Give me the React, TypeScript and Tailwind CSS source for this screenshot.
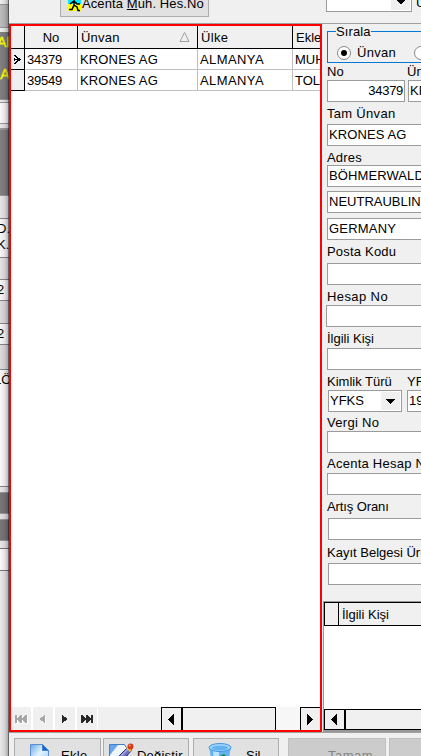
import React from 'react';

type LineProps = { label: string; value?: string; gap: string; box?: string; height: string; track?: string };

function Input({ value, className = '' }: { value?: string; className?: string }) {
  return (
    <div className={`h-[22px] shrink-0 overflow-hidden border border-[#9b9b9b] bg-white px-px pt-[2px] ${className}`}>
      {value}
    </div>
  );
}

function Line({ label, value, gap, box = 'ml-[3px]', height, track = '' }: LineProps) {
  return (
    <div className="shrink-0">
      <div className={`pl-[3px] ${gap} ${height} ${track}`}>{label}</div>
      <Input value={value} className={`w-[140px] tracking-[0.1px] ${box}`} />
    </div>
  );
}

function BackgroundWindow() {
  const parts: [string, string][] = [
    ['h-[4px] bg-[#efefef]', ''],
    ['h-[23px] bg-[#bdbdbd] border-t border-[#999]', ''],
    ['h-[5px] bg-[#ededed] border-t border-[#999]', ''],
    ['h-[67px] bg-[#808080]', 'yellow'],
    ['h-[3px] bg-[#e8e8e8] border-t border-[#999]', ''],
    ['h-[22px] bg-[#fafafa] border-y border-[#999]', ''],
    ['h-[4px] bg-[#e8e8e8]', ''],
    ['h-[67px] bg-[#808080] border-t-2 border-[#999]', ''],
    ['h-[23px] bg-[#e7e7e7] border-t border-[#999]', ''],
    ['h-[39px] bg-[#f7f7f7] border-t border-[#888]', 'dk'],
    ['h-[22px] bg-[#e3e3e3] border-t border-[#888]', ''],
    ['h-[21px] bg-[#f7f7f7] border-t border-[#888]', 'two'],
    ['h-[23px] bg-[#dcdcdc] border-t border-[#888]', ''],
    ['h-[21px] bg-[#f7f7f7] border-t border-[#888]', 'two'],
    ['h-[25px] bg-[#dcdcdc] border-t border-[#888]', ''],
    ['h-[117px] bg-[#f9f9f9] border-t border-[#888]', 'lo'],
    ['h-[6px] bg-[#e8e8e8] border-t border-[#888]', ''],
    ['h-[22px] bg-[#777] border-y border-[#999]', ''],
    ['h-[5px] bg-[#e3e3e3]', ''],
    ['h-[22px] bg-[#777] border-y border-[#999]', ''],
    ['h-[7px] bg-[#e8e8e8]', ''],
    ['h-[23px] bg-[#fafafa] border-y border-[#777]', ''],
    ['h-[185px] bg-[#e8e8e8]', ''],
  ];
  return (
    <div className="relative flex h-[756px] w-[9px] shrink-0 flex-col overflow-hidden">
      {parts.map(([cls, kind], i) => (
        <div key={i} className={`shrink-0 overflow-hidden whitespace-nowrap ${cls}`}>
          {kind === 'yellow' && (
            <div className="text-[14px] text-[#ffff00] [-webkit-text-stroke:0.4px_#ffff00]">
              <div className="-ml-[3px] mt-[3px]">AL</div>
              <div className="-ml-[9px] mt-[17px]">KA</div>
            </div>
          )}
          {kind === 'dk' && (
            <div className="-ml-[3px]">
              <div className="mt-[2px]">D.</div>
              <div className="mt-[1px]">K.</div>
            </div>
          )}
          {kind === 'two' && <div className="-ml-[3px] mt-[2px]">2</div>}
          {kind === 'lo' && <div className="-ml-[6px] mt-[2px]">LÖ</div>}
        </div>
      ))}
      <div className="absolute inset-0 bg-linear-to-r from-transparent via-black/8 to-black/30" />
      <div className="absolute inset-y-0 right-0 w-px bg-black/40" />
    </div>
  );
}

function GridRow({ no, extra, current }: { no: string; extra: string; current?: boolean }) {
  return (
    <div className="flex h-[21px] shrink-0">
      <div className="flex w-[14px] shrink-0 items-center border-r border-b border-black bg-[#f0f0f0]">
        {current && (
          <svg width="13" height="20" viewBox="0 0 13 20" shapeRendering="crispEdges">
            <path d="M3 6h2v1h1v1h1v1h2v1h1v1H9v1H7v1H6v1H5v1H3v-1h1v-1h1v-1h1v-1H3v-1h3V9H5V8H4V7H3zM3 9h1v3H3z" />
          </svg>
        )}
      </div>
      <div className="w-[53px] shrink-0 border-r border-b border-[#c0c0c0] pl-[2px] pt-[3px]">
        <span className="tracking-[-0.2px]">{no}</span>
      </div>
      <div className="w-[120px] shrink-0 border-r border-b border-[#c0c0c0] pl-[2px] pt-[3px] tracking-[0.15px]">KRONES AG</div>
      <div className="w-[95px] shrink-0 border-r border-b border-[#c0c0c0] pl-[2px] pt-[3px] tracking-[0.4px]">ALMANYA</div>
      <div className="w-[27px] shrink-0 overflow-hidden border-b border-[#c0c0c0] pl-[2px] pt-[3px]">{extra}</div>
    </div>
  );
}

function Arrow({ dir }: { dir: 'left' | 'right' }) {
  return (
    <svg className="mr-[2px]" width="6" height="11" viewBox="0 0 6 11" shapeRendering="crispEdges">
      <path d={dir === 'left' ? 'M6 0v11L0 6V5z' : 'M0 0v11l6-5V5z'} />
    </svg>
  );
}

function NavIcon({ kind }: { kind: 'first' | 'prev' | 'next' | 'last' }) {
  const paths = {
    first: 'M0 0h2v3h1V2h1V1h1V0h2v3h1V2h1V1h1V0h2v8h-2V7H9V6H8V5H7v3H5V7H4V6H3V5H2v3H0z',
    prev: 'M5 0v8H4V7H3V6H1V5H0V3h1V2h2V1h1V0z',
    next: 'M0 0h1v1h1v1h2v1h1v2H4v1H2v1H1v1H0z',
    last: 'M0 0h2v1h1v1h1v1h1V0h2v1h1v1h1v1h1V0h2v8h-2V5H9v1H8v1H7v1H5V5H4v1H3v1H2v1H0z',
  };
  const off = kind === 'first' || kind === 'prev';
  const wide = kind === 'first' || kind === 'last';
  return (
    <div className="mr-[2px] flex h-[23px] w-[20px] shrink-0 items-center justify-center bg-[#f0f0f0] pt-[1px]">
      <svg width={wide ? 13 : 6} height="9" viewBox={wide ? '0 0 13 9' : '0 0 6 9'} shapeRendering="crispEdges">
        {off && <path d={paths[kind]} fill="#fff" transform="translate(1 1)" />}
        <path d={paths[kind]} fill={off ? '#a7a7a7' : '#282828'} />
      </svg>
    </div>
  );
}

function MainGrid() {
  return (
    <div className="flex h-[708px] w-[313px] shrink-0 flex-col overflow-hidden border-2 border-[#ff0000] bg-white">
      <div className="flex h-[23px] shrink-0 border-b border-black bg-[#f0f0f0]">
        <div className="w-[14px] shrink-0 border-r border-black" />
        <div className="w-[53px] shrink-0 border-r border-black pt-[4px] text-center">No</div>
        <div className="flex w-[120px] shrink-0 justify-between border-r border-black pl-[3px] pr-[7px] pt-[4px]">
          <span className="tracking-[0.2px]">Ünvan</span>
          <svg className="mt-[1px]" width="11" height="12" viewBox="0 0 11 12">
            <path d="M5.5 1.5L10 10.5H1z" fill="none" stroke="#a0a0a0" />
          </svg>
        </div>
        <div className="w-[95px] shrink-0 border-r border-black pl-[3px] pt-[4px] tracking-[0.3px]">Ülke</div>
        <div className="w-[27px] shrink-0 overflow-hidden pl-[3px] pt-[4px]">Ekle</div>
      </div>
      <GridRow no="34379" extra="MUH" current />
      <GridRow no="39549" extra="TOL" />
      <div className="flex-1" />
      <div className="flex h-[23px] shrink-0">
        <NavIcon kind="first" />
        <NavIcon kind="prev" />
        <NavIcon kind="next" />
        <NavIcon kind="last" />
        <div className="-ml-px w-[63px] shrink-0 bg-[#f0f0f0]" />
        <div className="flex w-[21px] shrink-0 items-center justify-center border-t border-x border-black bg-[#f0f0f0] pt-[1px]">
          <Arrow dir="left" />
        </div>
        <div className="w-[94px] shrink-0 border-t border-x border-black bg-[#f0f0f0]" />
        <div className="w-[24px] shrink-0 bg-[#f7f7f7]" />
        <div className="flex w-[20px] shrink-0 items-center justify-center border-t border-l border-black bg-[#f0f0f0] pt-[1px]">
          <Arrow dir="right" />
        </div>
      </div>
    </div>
  );
}

function DetailPanel() {
  return (
    <div className="flex h-[708px] min-w-0 flex-1 flex-col overflow-hidden pl-[2px]">
      <fieldset className="ml-[3px] flex h-[39px] w-[120px] shrink-0 flex-col">
        <div className="flex h-[8px] items-end">
          <div className="h-px w-[9px] bg-[#0078d7]" />
          <span className="z-10 -mb-[7px] h-[15px] w-[35px] tracking-[0.1px]">Sırala</span>
          <div className="h-px flex-1 bg-[#0078d7]" />
        </div>
        <div className="flex h-[31px] border-b border-l border-[#0078d7] pl-[9px] pt-[13px]">
          <span className="mt-[1px] flex size-[14px] shrink-0 items-center justify-center rounded-full border border-[#888] bg-white">
            <span className="size-[6px] rounded-full bg-black" />
          </span>
          <span className="ml-[6px] w-[51px] shrink-0 tracking-[0.3px]">Ünvan</span>
          <span className="ml-[6px] mt-[1px] size-[14px] shrink-0 rounded-full border border-[#888] bg-white" />
        </div>
      </fieldset>

      <div className="flex h-[17px] shrink-0 pl-[3px] pt-[1px]">
        <span className="w-[80px] shrink-0">No</span>
        <span>Ünvan</span>
      </div>
      <div className="flex shrink-0 pl-[3px]">
        <Input value="34379" className="w-[78px] text-right tracking-[-0.3px]" />
        <Input value="KRONES" className="ml-[3px] w-[80px]" />
      </div>
      <Line label="Tam Ünvan" value="KRONES AG" gap="pt-[4px]" height="h-[22px]" track="tracking-[0.3px]" />
      <Line label="Adres" value="BÖHMERWALDSTR" gap="pt-[4px]" height="h-[19px]" track="tracking-[0.2px]" />
      <Input value="NEUTRAUBLING" className="ml-[3px] mt-[4px] w-[140px]" />
      <Input value="GERMANY" className="ml-[3px] mt-[5px] w-[140px] tracking-[0.2px]" />
      <Line label="Posta Kodu" gap="pt-[4px]" height="h-[23px]" track="tracking-[0.2px]" />
      <Line label="Hesap No" gap="pt-[4px]" height="h-[20px]" box="ml-[2px]" track="tracking-[0.4px]" />
      <Line label="İlgili Kişi" gap="pt-[4px]" height="h-[21px]" />
      <div className="flex h-[20px] shrink-0 pl-[3px] pt-[4px]">
        <span className="w-[80px] shrink-0">Kimlik Türü</span>
        <span>YFKS</span>
      </div>
      <div className="flex shrink-0 pl-[4px]">
        <div className="flex h-[22px] w-[74px] shrink-0 border border-[#9b9b9b] bg-white pl-[1px]">
          <span className="w-[51px] pt-[2px]">YFKS</span>
          <span className="mt-[1px] flex h-[18px] w-[19px] items-center justify-center bg-[#f0f0f0]">
            <svg width="9" height="5" viewBox="0 0 9 5" shapeRendering="crispEdges"><path d="M0 0h9L5 5H4z" /></svg>
          </span>
        </div>
        <Input value="1958" className="ml-[5px] w-[80px]" />
      </div>
      <Line label="Vergi No" gap="pt-[3px]" height="h-[19px]" track="tracking-[0.3px]" />
      <Line label="Acenta Hesap No" gap="pt-[3px]" height="h-[20px]" track="tracking-[0.25px]" />
      <Line label="Artış Oranı" gap="pt-[4px]" height="h-[23px]" box="ml-[4px]" track="tracking-[-0.1px]" />
      <Line label="Kayıt Belgesi Ürün" gap="pt-[5px]" height="h-[23px]" box="ml-[4px]" />

      <div className="-ml-px mt-[16px] flex h-[131px] shrink-0 flex-col border-b-2 border-l border-t border-[#999] bg-white">
        <div className="flex h-[24px] shrink-0 border-y border-l border-black bg-[#f0f0f0]">
          <div className="w-[14px] shrink-0 border-r border-black" />
          <span className="pl-[3px] pt-[4px]">İlgili Kişi</span>
        </div>
        <div className="flex-1" />
        <div className="flex h-[21px] shrink-0 border border-r-0 border-black bg-[#f0f0f0]">
          <div className="flex w-[21px] items-center justify-center border-r-2 border-black">
            <Arrow dir="left" />
          </div>
        </div>
      </div>
    </div>
  );
}

function PageIcon() {
  return (
    <svg width="20" height="22" viewBox="0 0 20 22">
      <defs>
        <linearGradient id="page" x2="1" y2="1">
          <stop stopColor="#67a5e9" />
          <stop offset=".45" stopColor="#e3f3ff" />
          <stop offset="1" stopColor="#8fc8f4" />
        </linearGradient>
      </defs>
      <path d="M.5.5h12l6 6V22H.5z" fill="url(#page)" stroke="#5c8fd0" />
      <path d="M12.5.5l6 6h-6z" fill="#1766c5" stroke="#3e7fcf" />
    </svg>
  );
}

function EditIcon() {
  return (
    <svg width="25" height="23" viewBox="0 0 25 23">
      <path d="M.5 1.5h15l3 5V23H.5z" fill="#edf6ff" stroke="#417ece" />
      <path d="M1 2h8L1 12z" fill="#68a5ec" />
      <path d="M8 19l2-6 9-9 4 3-9 10z" fill="#716fc4" stroke="#31366e" />
      <path d="M12 13l8-8" stroke="#aaa8ef" strokeWidth="1.5" />
      <path d="M17 5l2-2 4 4-2 2z" fill="#f3c33d" />
      <circle cx="21.5" cy="3.5" r="3" fill="#d33a17" />
      <circle cx="20.7" cy="2.5" r="1" fill="#ff9b70" />
    </svg>
  );
}

function BinIcon() {
  return (
    <svg width="24" height="20" viewBox="0 0 24 20">
      <path d="M1 4l3 16h16l3-16z" fill="#61b2ee" />
      <path d="M5 8l1 12h5V9z" fill="#b9e2ff" />
      <ellipse cx="12" cy="4.5" rx="11" ry="4" fill="#9cd3fb" stroke="#4296e2" />
      <ellipse cx="12" cy="5" rx="8" ry="2.3" fill="#65b2f0" />
      <path d="M12 13l4-2 3 3-2 3h-4z" fill="#168039" />
    </svg>
  );
}

function Footer() {
  return (
    <div className="flex h-[24px] shrink-0 overflow-hidden border-t border-[#a0a0a0] pl-[5px] pt-[5px]">
      <div className="flex h-[30px] w-[87px] shrink-0 border border-[#adadad] bg-[#e1e1e1] pl-[15px] pt-[5px]">
        <PageIcon />
        <span className="ml-[11px] mt-[4px] tracking-[0.3px]">Ekle</span>
      </div>
      <div className="ml-[2px] flex h-[30px] w-[86px] shrink-0 border border-[#adadad] bg-[#e1e1e1] pl-[5px] pt-[4px]">
        <EditIcon />
        <span className="ml-[3px] mt-[5px] tracking-[0.2px]">Değiştir</span>
      </div>
      <div className="ml-[4px] flex h-[30px] w-[86px] shrink-0 border border-[#adadad] bg-[#e1e1e1] pl-[14px] pt-[4px]">
        <BinIcon />
        <span className="ml-[14px] mt-[5px]">Sil</span>
      </div>
      <div className="ml-[9px] h-[30px] w-[98px] shrink-0 border border-[#bfbfbf] bg-[#cccccc] pl-[39px] pt-[9px] tracking-[0.5px] text-[#838383]">Tamam</div>
      <div className="ml-[3px] h-[30px] w-[60px] shrink-0 border border-[#bfbfbf] bg-[#cccccc]" />
    </div>
  );
}

function TopBar() {
  return (
    <div className="flex h-[24px] shrink-0 overflow-hidden border-b border-[#a0a0a0]">
      <div className="ml-[51px] flex h-[17px] w-[149px] shrink-0 border-x border-b border-[#adadad] bg-[#e1e1e1] pl-[7px]">
        <svg className="shrink-0" width="13" height="12" viewBox="0 0 13 12">
          <path d="M0 0h13v4H0z" fill="#00eaff" />
          <path d="M0 4h13v7H0z" fill="#ffff00" />
          <path d="M6 0v5L4 9.500H1M6 5l3 2 1 3.500h2M2 4l4-3 3 3h3" fill="none" stroke="#000" strokeWidth="1.5" />
        </svg>
        <span className="-mt-[4px] ml-[1px] tracking-[0.1px]">Acenta <span className="underline">M</span>uh. Hes.No</span>
      </div>
      <div className="ml-[117px] flex h-[12px] w-[86px] shrink-0 justify-end border-x border-b border-[#9b9b9b] bg-white pr-px">
        <div className="flex h-[10px] w-[19px] justify-center bg-[#f0f0f0]">
          <svg width="9" height="4" viewBox="0 0 9 4" shapeRendering="crispEdges"><path d="M0 0h9L5 4H4z" /></svg>
        </div>
      </div>
      <span className="-mt-[5px] ml-[4px]">Ü</span>
    </div>
  );
}

export default function App() {
  return (
    <div className="flex h-[756px] w-[421px] overflow-hidden bg-[#f0f0f0] font-['Liberation_Sans',Arial,sans-serif] text-[13px] leading-[15px] whitespace-nowrap text-black">
      <BackgroundWindow />
      <div className="flex min-w-0 flex-1 flex-col">
        <TopBar />
        <div className="flex h-[708px] shrink-0">
          <MainGrid />
          <DetailPanel />
        </div>
        <Footer />
      </div>
    </div>
  );
}
